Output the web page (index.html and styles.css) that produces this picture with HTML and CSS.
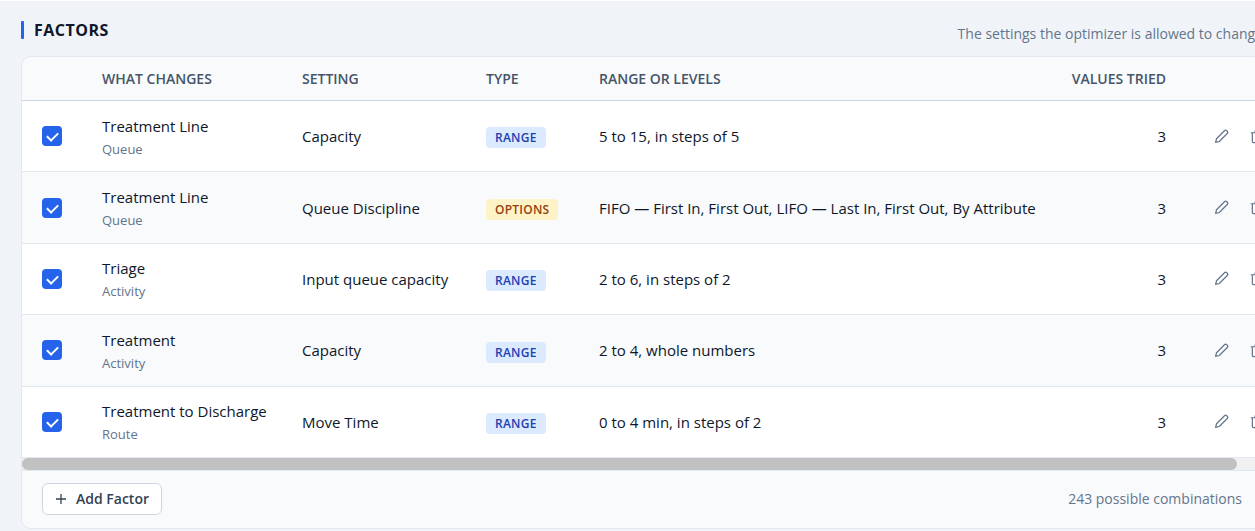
FILE: index.html
```html
<!DOCTYPE html>
<html lang="en">
<head>
  <meta charset="UTF-8" />
  <title>Factors</title>
  <link rel="stylesheet" href="styles.css">
</head>
<body>

  <svg class="sprite" width="0" height="0" aria-hidden="true">
    <symbol id="pencil" viewBox="0 0 16 16">
      <path d="M1.7 14.3l1-3.9 8.5-8.5a1.7 1.7 0 0 1 2.4 0l.5.5a1.7 1.7 0 0 1 0 2.4l-8.5 8.5z" />
    </symbol>
    <symbol id="trash" viewBox="0 0 16 16">
      <path d="M.8 4h14.4M5.5 4V2.2a.7.7 0 0 1 .7-.7h3.6a.7.7 0 0 1 .7.7V4M2.5 4v9.3a1.2 1.2 0 0 0 1.2 1.2h8.6a1.2 1.2 0 0 0 1.2-1.2V4" />
    </symbol>
  </svg>

  <section class="factors">
    <header class="section-head">
      <h2>FACTORS</h2>
      <p class="note">The settings the optimizer is allowed to change</p>
    </header>

    <div class="panel">
      <div class="table-scroll">
        <table>
          <colgroup>
            <col class="col-check"><col class="col-what"><col class="col-setting"><col class="col-type"><col><col class="col-values"><col class="col-actions">
          </colgroup>
          <thead>
            <tr>
              <th></th>
              <th>WHAT CHANGES</th>
              <th>SETTING</th>
              <th>TYPE</th>
              <th>RANGE OR LEVELS</th>
              <th class="num">VALUES TRIED</th>
              <th></th>
            </tr>
          </thead>
          <tbody>
            <tr>
              <td><input type="checkbox" aria-label="Use Treatment Line capacity" checked></td>
              <td><div class="name">Treatment Line</div><div class="kind">Queue</div></td>
              <td>Capacity</td>
              <td><span class="badge range">RANGE</span></td>
              <td>5 to 15, in steps of 5</td>
              <td class="num">3</td>
              <td><div class="actions">
                <button type="button" aria-label="Edit"><svg><use href="#pencil" /></svg></button>
                <button type="button" aria-label="Delete"><svg><use href="#trash" /></svg></button>
              </div></td>
            </tr>
            <tr>
              <td><input type="checkbox" aria-label="Use Treatment Line queue discipline" checked></td>
              <td><div class="name">Treatment Line</div><div class="kind">Queue</div></td>
              <td>Queue Discipline</td>
              <td><span class="badge options">OPTIONS</span></td>
              <td>FIFO — First In, First Out, LIFO — Last In, First Out, By Attribute</td>
              <td class="num">3</td>
              <td><div class="actions">
                <button type="button" aria-label="Edit"><svg><use href="#pencil" /></svg></button>
                <button type="button" aria-label="Delete"><svg><use href="#trash" /></svg></button>
              </div></td>
            </tr>
            <tr>
              <td><input type="checkbox" aria-label="Use Triage input queue capacity" checked></td>
              <td><div class="name">Triage</div><div class="kind">Activity</div></td>
              <td>Input queue capacity</td>
              <td><span class="badge range">RANGE</span></td>
              <td>2 to 6, in steps of 2</td>
              <td class="num">3</td>
              <td><div class="actions">
                <button type="button" aria-label="Edit"><svg><use href="#pencil" /></svg></button>
                <button type="button" aria-label="Delete"><svg><use href="#trash" /></svg></button>
              </div></td>
            </tr>
            <tr>
              <td><input type="checkbox" aria-label="Use Treatment capacity" checked></td>
              <td><div class="name">Treatment</div><div class="kind">Activity</div></td>
              <td>Capacity</td>
              <td><span class="badge range">RANGE</span></td>
              <td>2 to 4, whole numbers</td>
              <td class="num">3</td>
              <td><div class="actions">
                <button type="button" aria-label="Edit"><svg><use href="#pencil" /></svg></button>
                <button type="button" aria-label="Delete"><svg><use href="#trash" /></svg></button>
              </div></td>
            </tr>
            <tr>
              <td><input type="checkbox" aria-label="Use Treatment to Discharge move time" checked></td>
              <td><div class="name">Treatment to Discharge</div><div class="kind">Route</div></td>
              <td>Move Time</td>
              <td><span class="badge range">RANGE</span></td>
              <td>0 to 4 min, in steps of 2</td>
              <td class="num">3</td>
              <td><div class="actions">
                <button type="button" aria-label="Edit"><svg><use href="#pencil" /></svg></button>
                <button type="button" aria-label="Delete"><svg><use href="#trash" /></svg></button>
              </div></td>
            </tr>
          </tbody>
        </table>
      </div>
      <div class="scrollbar"><div class="thumb"></div></div>
      <footer class="panel-foot">
        <button type="button" class="add">
          <svg viewBox="0 0 12 12"><path d="M6 1v10M1 6h10" /></svg>
          Add Factor
        </button>
        <span class="total">243 possible combinations</span>
      </footer>
    </div>
  </section>

</body>
</html>
```

FILE: styles.css
```css
* { box-sizing: border-box; }
body {
  margin: 0;
  border-top: 1px solid #fff;
  background: #f0f4f8;
  color: #0f172a;
  font: 15px/24px "Segoe UI", "Open Sans", "Noto Sans", sans-serif;
  overflow-x: hidden;
}
button { font: inherit; cursor: pointer; }
.sprite { position: absolute; }

/* the section runs past the right edge of the window */
.factors { margin: 0 -8px 0 21px; padding-top: 17px; }
.section-head { display: flex; justify-content: space-between; height: 38px; }
h2 {
  display: flex;
  align-items: center;
  gap: 10px;
  margin: 0;
  height: 24px;
  font-size: 16px;
  font-weight: 700;
  letter-spacing: 0.03em;
}
h2::before { content: ""; width: 3px; height: 18px; border-radius: 1px; background: #2563eb; }
.note { margin: 4px 0 0; font-size: 14px; color: #64748b; white-space: nowrap; }

.panel { border: 1px solid #e2e8f0; border-radius: 10px; background: #f8fafc; overflow: hidden; }
.table-scroll { overflow: hidden; }
table { width: 1270px; height: 401px; table-layout: fixed; border-collapse: separate; border-spacing: 0; }
.col-check { width: 60px; }
.col-what { width: 200px; }
.col-setting { width: 184px; }
.col-type { width: 113px; }
.col-values { width: 135px; }
.col-actions { width: 106px; }

th {
  height: 44px;
  padding: 0 20px;
  border-bottom: 1px solid #cbd5e1;
  text-align: left;
  font-size: 14px;
  font-weight: 600;
  color: #475569;
  white-space: nowrap;
}
td { padding: 0 20px; border-bottom: 1px solid #e2e8f0; background: #fff; white-space: nowrap; }
tbody tr:nth-child(even) td { background: #f8fafc; }
.num { text-align: right; }
.kind { margin-top: 1px; font-size: 13px; line-height: 20px; color: #64748b; }

input[type="checkbox"] {
  appearance: none;
  display: block;
  width: 20px;
  height: 20px;
  margin: 0;
  border-radius: 4px;
  background: #2563eb;
}
input[type="checkbox"]:checked::before {
  content: "";
  display: block;
  width: 9px;
  height: 5px;
  margin: 6px 5px;
  border: solid #fff;
  border-width: 0 0 2px 2px;
  transform: rotate(-45deg);
}

.badge {
  display: inline-block;
  padding: 0 9px;
  border-radius: 4px;
  font-size: 12px;
  font-weight: 600;
  letter-spacing: 0.02em;
  line-height: 21px;
  vertical-align: middle;
}
.range { background: #dbeafe; color: #1e40af; }
.options { background: #fef3c7; color: #92400e; }

.actions { display: flex; gap: 6px; }
.actions button {
  display: flex;
  align-items: center;
  justify-content: center;
  width: 30px;
  height: 30px;
  padding: 0;
  border: 0;
  background: none;
}
.actions svg { width: 15px; height: 15px; fill: none; stroke: #64748b; stroke-width: 1.3; stroke-linejoin: round; }

.scrollbar { height: 13px; border-bottom: 1px solid #e2e8f0; background: #f1f1f1; }
.thumb { width: 98%; height: 12px; border-radius: 6px; background: #c1c1c1; }

.panel-foot { display: flex; align-items: center; justify-content: space-between; padding: 12px 20px 13px; }
.add {
  display: flex;
  align-items: center;
  gap: 9px;
  height: 32px;
  padding: 0 12px;
  border: 1px solid #cbd5e1;
  border-radius: 6px;
  background: #fff;
  color: #334155;
  font-size: 14px;
  font-weight: 600;
}
.add svg { width: 12px; height: 12px; fill: none; stroke: #334155; stroke-width: 1.3; }
.total { font-size: 14px; color: #64748b; }
```
